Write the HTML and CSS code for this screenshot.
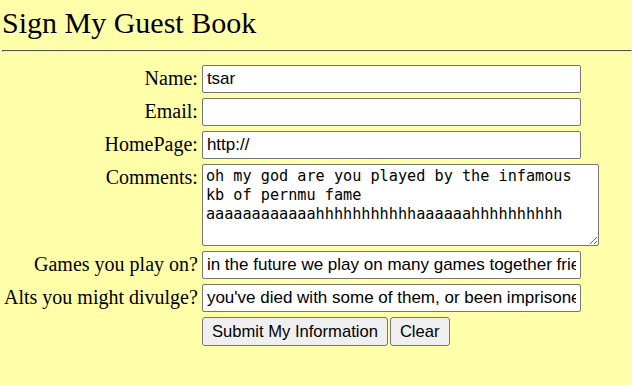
FILE: index.html
```html
<!DOCTYPE html>
<html lang="en">
<head>
    <meta charset="UTF-8">
    <meta name="viewport" content="width=device-width, initial-scale=1.0">
    <title>Sign My Guest Book</title>
    <link rel="stylesheet" href="styles.css">
</head>
<body>

    <h1 class="title">Sign My Guest Book</h1>
    <hr class="rule">

    <form class="guest-form">
        <label class="field-label" for="name">Name:</label>
        <input class="field" type="text" id="name" value="tsar">

        <label class="field-label" for="email">Email:</label>
        <input class="field" type="text" id="email" value="">

        <label class="field-label" for="homepage">HomePage:</label>
        <input class="field" type="text" id="homepage" value="http://">

        <label class="field-label" for="comments">Comments:</label>
        <textarea class="comments" id="comments">oh my god are you played by the infamous kb of pernmu fame aaaaaaaaaaaahhhhhhhhhhhaaaaaahhhhhhhhhh</textarea>

        <label class="field-label" for="games">Games you play on?</label>
        <input class="field" type="text" id="games" value="in the future we play on many games together friends">

        <label class="field-label" for="alts">Alts you might divulge?</label>
        <input class="field" type="text" id="alts" value="you've died with some of them, or been imprisoned by them">

        <div class="buttons">
            <button class="btn" type="submit">Submit My Information</button>
            <button class="btn" type="reset">Clear</button>
        </div>
    </form>

</body>
</html>
```

FILE: styles.css
```css
body {
    margin: 6px 0 0 2px;
    background-color: #ffffaa;
    color: #000;
    font-family: 'Liberation Serif', 'Times New Roman', serif;
}

.title {
    margin: 0;
    font-size: 30px;
    font-weight: normal;
    line-height: normal;
}

.rule {
    margin: 10px 0 0 0;
    border: 1px inset #a8a8a0;
    border-bottom-color: #eeeed8;
    border-right-color: #eeeed8;
    height: 0;
}

.guest-form {
    display: grid;
    grid-template-columns: max-content max-content;
    column-gap: 2px;
    row-gap: 5px;
    align-items: start;
    margin-top: 13px;
}

.field-label {
    padding: 2px 2px 0 2px;
    text-align: right;
    font-size: 20px;
    line-height: 23px;
}

.field {
    box-sizing: border-box;
    width: 379px;
    height: 28px;
    margin: 0;
    padding: 0 4px;
    border: 1px solid #767676;
    border-radius: 2px;
    background-color: #fff;
    font-family: 'Liberation Sans', Arial, sans-serif;
    font-size: 17px;
    color: #000;
}

.comments {
    box-sizing: border-box;
    width: 397px;
    height: 82px;
    margin: 0;
    padding: 2px 3px;
    border: 1px solid #767676;
    border-radius: 2px;
    background-color: #fff;
    font-family: 'DejaVu Sans Mono', 'Liberation Mono', monospace;
    font-size: 15.2px;
    line-height: 19px;
    color: #000;
    overflow: hidden;
}

.buttons {
    grid-column: 2;
    display: flex;
    gap: 2px;
}

.btn {
    box-sizing: border-box;
    height: 29px;
    margin: 0;
    padding: 0 9px;
    border: 1px solid #767676;
    border-radius: 3px;
    background-color: #efefef;
    font-family: 'Liberation Sans', Arial, sans-serif;
    font-size: 16.6px;
    color: #000;
}
```
